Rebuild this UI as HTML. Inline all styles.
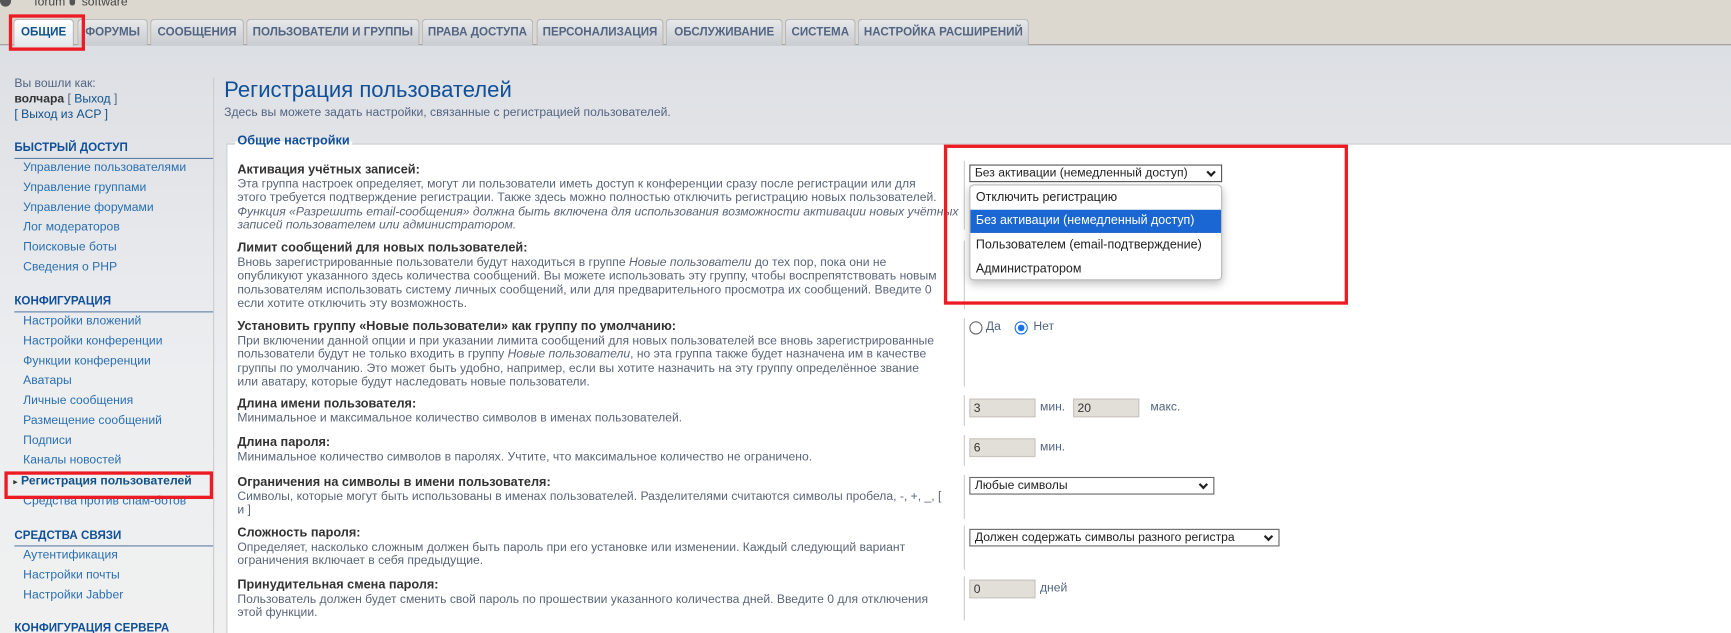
<!DOCTYPE html>
<html><head><meta charset="utf-8">
<style>
*{margin:0;padding:0;box-sizing:border-box}
html,body{width:1731px;height:633px;overflow:hidden}
body{position:relative;font-family:"Liberation Sans","DejaVu Sans",sans-serif;font-size:11px;color:#536482;background:#dcd8d0}
#wrap{position:absolute;left:0;top:0;width:1568px;height:574px;transform:scale(1.104);transform-origin:0 0}
.a{position:absolute;white-space:nowrap}
#panel{position:absolute;left:0;top:40px;width:1568px;height:540px;background:linear-gradient(#dcdfe3,#e2e4e8 100px,#eceef0 300px,#f0f0f0);border-top:1px solid #999}
.tab{position:absolute;top:17px;height:24px;background:linear-gradient(#e6e8ea,#c9ccd0);border:1px solid #b4b8bc;border-bottom:none;border-radius:4px 4px 0 0;font-weight:bold;font-size:10.5px;color:#536482;text-align:center;line-height:23px}
.tab.act{background:linear-gradient(#fff,#e4e8ec);color:#105289;height:25px}
.sh{position:absolute;left:13px;width:180px;font-weight:bold;font-size:10.5px;color:#115098;border-bottom:1px solid #5f7ea6;padding-bottom:3px}
.li{position:absolute;left:21px;font-size:11px;color:#2a6fb0;white-space:nowrap}
#main{position:absolute;left:205px;top:130px;width:1400px;height:460px;background:#fff;border-left:1px solid #ccc;border-top:1px solid #ccc}
.rt{position:absolute;left:215px;font-weight:bold;color:#333;font-size:11.5px;white-space:nowrap}
.rd{position:absolute;left:215px;line-height:12.4px;color:#5a6578;font-size:11px;white-space:nowrap}
.sep{position:absolute;left:873px;width:1px;background:#ccc}
.red{position:absolute;border:3.6px solid #ed1c24}
.inp{position:absolute;left:878px;width:60px;height:17px;background:#e2ded8;border:1px solid #c8c4bd;font-size:11px;color:#333;padding:2px 3px}
.sel{position:absolute;left:878px;height:16px;border:1px solid #666;background:#fff;font-size:11px;color:#222;padding:1px 4px;line-height:12px}
.sel:after{content:"";position:absolute;right:6px;top:3px;width:4px;height:4px;border-right:2px solid #222;border-bottom:2px solid #222;transform:rotate(45deg)}
</style></head><body><div id="wrap">
<div class="a" style="left:0;top:-4px;width:10px;height:10px;background:#555;border-radius:0 0 5px 5px"></div>
<div class="a" style="left:31px;top:-4px;font-size:11px;color:#444">forum</div>
<div class="a" style="left:63px;top:-2px;width:5px;height:7px;background:#555;border-radius:0 0 3px 3px"></div>
<div class="a" style="left:74px;top:-4px;font-size:11px;color:#444">software</div>

<div id="panel"></div>
<div class="tab act" style="left:12px;width:55px">ОБЩИЕ</div>
<div class="tab" style="left:70px;width:64px">ФОРУМЫ</div>
<div class="tab" style="left:136px;width:85px">СООБЩЕНИЯ</div>
<div class="tab" style="left:223px;width:157px">ПОЛЬЗОВАТЕЛИ И ГРУППЫ</div>
<div class="tab" style="left:382px;width:101px">ПРАВА ДОСТУПА</div>
<div class="tab" style="left:486px;width:115px">ПЕРСОНАЛИЗАЦИЯ</div>
<div class="tab" style="left:603px;width:106px">ОБСЛУЖИВАНИЕ</div>
<div class="tab" style="left:711px;width:64px">СИСТЕМА</div>
<div class="tab" style="left:777px;width:155px">НАСТРОЙКА РАСШИРЕНИЙ</div>
<div class="red" style="left:8px;top:13px;width:69px;height:33px"></div>

<div class="a" style="left:193px;top:70px;width:1px;height:520px;background:#ccc"></div>
<div class="a" style="left:13px;top:70px;font-size:11px;color:#536482">Вы вошли как:</div>
<div class="a" style="left:13px;top:84px;font-size:11px;color:#536482"><b style="color:#333">волчара</b> [ <span style="color:#105289">Выход</span> ]</div>
<div class="a" style="left:13px;top:98px;font-size:11px;color:#105289">[ Выход из ACP ]</div>

<div class="sh" style="top:128px">БЫСТРЫЙ ДОСТУП</div>
<div class="li" style="top:146px">Управление пользователями</div>
<div class="li" style="top:164px">Управление группами</div>
<div class="li" style="top:182px">Управление форумами</div>
<div class="li" style="top:200px">Лог модераторов</div>
<div class="li" style="top:218px">Поисковые боты</div>
<div class="li" style="top:236px">Сведения о PHP</div>
<div class="sh" style="top:267px">КОНФИГУРАЦИЯ</div>
<div class="li" style="top:285px">Настройки вложений</div>
<div class="li" style="top:303px">Настройки конференции</div>
<div class="li" style="top:321px">Функции конференции</div>
<div class="li" style="top:339px">Аватары</div>
<div class="li" style="top:357px">Личные сообщения</div>
<div class="li" style="top:375px">Размещение сообщений</div>
<div class="li" style="top:393px">Подписи</div>
<div class="li" style="top:411px">Каналы новостей</div>
<div class="li" style="top:430px;left:12px;font-weight:bold;color:#105289"><span style="font-size:8px;color:#333">&#9656;</span> Регистрация пользователей</div>
<div class="li" style="top:448px">Средства против спам-ботов</div>
<div class="sh" style="top:479px">СРЕДСТВА СВЯЗИ</div>
<div class="li" style="top:497px">Аутентификация</div>
<div class="li" style="top:515px">Настройки почты</div>
<div class="li" style="top:533px">Настройки Jabber</div>
<div class="sh" style="top:563px">КОНФИГУРАЦИЯ СЕРВЕРА</div>
<div class="red" style="left:4px;top:427px;width:189px;height:25px"></div>

<div class="a" style="left:203px;top:71px;font-size:20px;color:#115098">Регистрация пользователей</div>
<div class="a" style="left:203px;top:96px;font-size:11px;color:#536482">Здесь вы можете задать настройки, связанные с регистрацией пользователей.</div>

<div id="main"></div>
<div class="a" style="left:213px;top:122px;font-size:11.5px;font-weight:bold;color:#115098;background:linear-gradient(transparent 50%,#fff 50%);padding:0 2px">Общие настройки</div>

<div class="sep" style="top:146px;height:62px"></div>
<div class="rt" style="top:148px">Активация учётных записей:</div>
<div class="rd" style="top:161px">Эта группа настроек определяет, могут ли пользователи иметь доступ к конференции сразу после регистрации или для<br>этого требуется подтверждение регистрации. Также здесь можно полностью отключить регистрацию новых пользователей.<br><i>Функция «Разрешить email-сообщения» должна быть включена для использования возможности активации новых учётных<br>записей пользователем или администратором.</i></div>

<div class="sep" style="top:218px;height:62px"></div>
<div class="rt" style="top:219px">Лимит сообщений для новых пользователей:</div>
<div class="rd" style="top:232px">Вновь зарегистрированные пользователи будут находиться в группе <i>Новые пользователи</i> до тех пор, пока они не<br>опубликуют указанного здесь количества сообщений. Вы можете использовать эту группу, чтобы воспрепятствовать новым<br>пользователям использовать систему личных сообщений, или для предварительного просмотра их сообщений. Введите 0<br>если хотите отключить эту возможность.</div>

<div class="sep" style="top:288px;height:62px"></div>
<div class="rt" style="top:290px">Установить группу «Новые пользователи» как группу по умолчанию:</div>
<div class="rd" style="top:303px">При включении данной опции и при указании лимита сообщений для новых пользователей все вновь зарегистрированные<br>пользователи будут не только входить в группу <i>Новые пользователи</i>, но эта группа также будет назначена им в качестве<br>группы по умолчанию. Это может быть удобно, например, если вы хотите назначить на эту группу определённое звание<br>или аватару, которые будут наследовать новые пользователи.</div>
<div class="a" style="left:878px;top:291px;width:12px;height:12px;border:1px solid #666;border-radius:50%;background:#fff"></div>
<div class="a" style="left:893px;top:290px;font-size:11px">Да</div>
<div class="a" style="left:919px;top:291px;width:12px;height:12px;border:1px solid #1a73e8;border-radius:50%;background:#fff"><div style="margin:2px;width:6px;height:6px;border-radius:50%;background:#1a73e8"></div></div>
<div class="a" style="left:936px;top:290px;font-size:11px">Нет</div>

<div class="sep" style="top:358px;height:28px"></div>
<div class="rt" style="top:360px">Длина имени пользователя:</div>
<div class="rd" style="top:373px">Минимальное и максимальное количество символов в именах пользователей.</div>
<div class="inp" style="top:361px">3</div>
<div class="a" style="left:942px;top:363px">мин.</div>
<div class="inp" style="left:972px;top:361px">20</div>
<div class="a" style="left:1042px;top:363px">макс.</div>

<div class="sep" style="top:394px;height:28px"></div>
<div class="rt" style="top:395px">Длина пароля:</div>
<div class="rd" style="top:408px">Минимальное количество символов в паролях. Учтите, что максимальное количество не ограничено.</div>
<div class="inp" style="top:397px">6</div>
<div class="a" style="left:942px;top:399px">мин.</div>

<div class="sep" style="top:430px;height:40px"></div>
<div class="rt" style="top:431px">Ограничения на символы в имени пользователя:</div>
<div class="rd" style="top:444px">Символы, которые могут быть использованы в именах пользователей. Разделителями считаются символы пробела, -, +, _, [<br>и ]</div>
<div class="sel" style="top:432px;width:222px">Любые символы</div>

<div class="sep" style="top:476px;height:40px"></div>
<div class="rt" style="top:477px">Сложность пароля:</div>
<div class="rd" style="top:490px">Определяет, насколько сложным должен быть пароль при его установке или изменении. Каждый следующий вариант<br>ограничения включает в себя предыдущие.</div>
<div class="sel" style="top:479px;width:281px">Должен содержать символы разного регистра</div>

<div class="sep" style="top:522px;height:40px"></div>
<div class="rt" style="top:524px">Принудительная смена пароля:</div>
<div class="rd" style="top:537px">Пользователь должен будет сменить свой пароль по прошествии указанного количества дней. Введите 0 для отключения<br>этой функции.</div>
<div class="inp" style="top:525px">0</div>
<div class="a" style="left:942px;top:527px">дней</div>

<div class="sel" style="top:149px;width:229px;border-color:#555">Без активации (немедленный доступ)</div>
<div class="a" style="left:878px;top:167px;width:229px;height:87px;background:#fff;border:1px solid #bbb;border-radius:4px;box-shadow:0 3px 8px rgba(0,0,0,.25);font-size:11.3px;color:#222">
<div style="position:absolute;left:5px;top:5px">Отключить регистрацию</div>
<div style="position:absolute;left:0;top:22px;width:227px;height:21px;background:#1a66d2;color:#fff;padding:4px 5px">Без активации (немедленный доступ)</div>
<div style="position:absolute;left:5px;top:48px">Пользователем (email-подтверждение)</div>
<div style="position:absolute;left:5px;top:70px">Администратором</div>
</div>
<div class="red" style="left:855px;top:131px;width:366px;height:145px"></div>
</div></body></html>
